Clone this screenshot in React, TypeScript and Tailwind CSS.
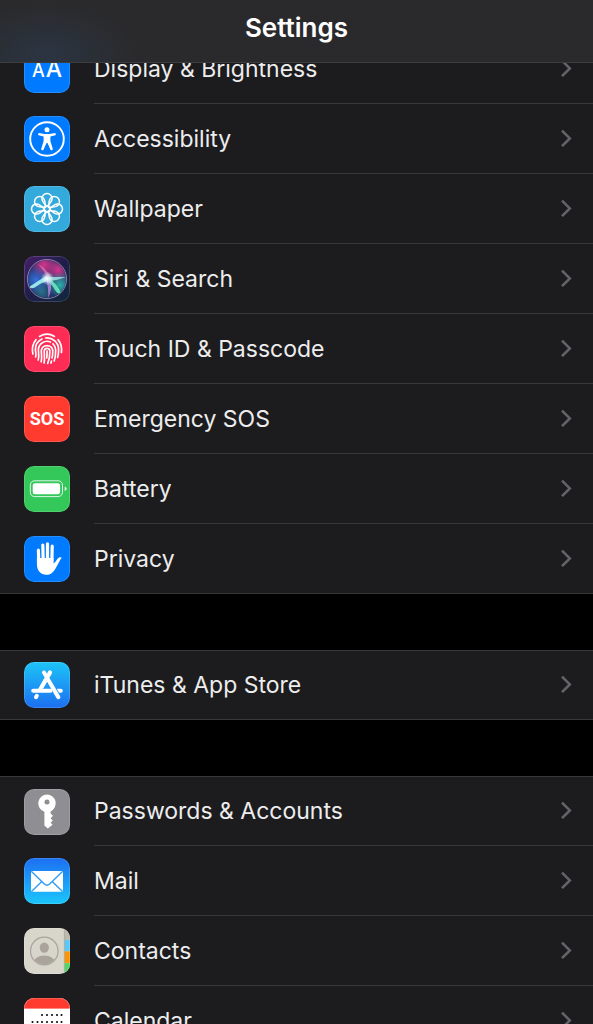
import React from 'react';

interface SettingsItem {
  id: string;
  label: string;
  icon: React.ReactNode;
}

const DisplayIcon = () => (
  <span className="flex h-full w-full items-baseline justify-center gap-px bg-[#007aff] font-['Inter',sans-serif] font-medium text-white">
    <span className="text-lg leading-[44px]">A</span>
    <span className="text-[23px] leading-[44px]">A</span>
  </span>
);

const AccessibilityIcon = () => (
  <svg viewBox="0 0 46 46" className="h-full w-full bg-[#007aff]" aria-hidden="true">
    <circle cx="23" cy="23" r="16.8" fill="none" stroke="#fff" strokeWidth="1.9" />
    <circle cx="23" cy="13.7" r="2.5" fill="#fff" />
    <path
      d="M14.8 16.9 L20.5 17.9 H25.5 L31.2 16.9 Q32.6 18.2 31.4 19.3 L26.4 20.6 V25 L28.9 33.2 Q28 35 26.6 33.9 L23.5 27 H22.5 L19.4 33.9 Q18 35 17.1 33.2 L19.6 25 V20.6 L14.6 19.3 Q13.4 18.2 14.8 16.9 Z"
      fill="#fff"
    />
  </svg>
);

const WallpaperIcon = () => (
  <svg viewBox="0 0 46 46" className="h-full w-full bg-[#34aadc]" aria-hidden="true">
    <g fill="none" stroke="#fff" strokeWidth="1.5">
      {[0, 45, 90, 135, 180, 225, 270, 315].map((angle) => (
        <path
          key={angle}
          d="M23 20.4 C21 18.4 17.9 15.8 17.9 12.6 A5.1 5.1 0 0 1 28.1 12.6 C28.1 15.8 25 18.4 23 20.4 Z"
          transform={`rotate(${angle} 23 23)`}
        />
      ))}
      <circle cx="23" cy="23" r="2.8" />
    </g>
  </svg>
);

const SiriIcon = () => (
  <svg viewBox="0 0 46 46" className="h-full w-full" aria-hidden="true">
    <defs>
      <linearGradient id="siriBg" x1="0" y1="0" x2="1" y2="1">
        <stop offset="0" stopColor="#45206b" />
        <stop offset="0.5" stopColor="#201d48" />
        <stop offset="1" stopColor="#10283f" />
      </linearGradient>
      <radialGradient id="siriPink">
        <stop offset="0" stopColor="#d8358c" />
        <stop offset="1" stopColor="#d8358c" stopOpacity="0" />
      </radialGradient>
      <radialGradient id="siriBlue">
        <stop offset="0" stopColor="#3470dc" />
        <stop offset="1" stopColor="#3470dc" stopOpacity="0" />
      </radialGradient>
      <radialGradient id="siriTeal">
        <stop offset="0" stopColor="#2cb0a8" />
        <stop offset="1" stopColor="#2cb0a8" stopOpacity="0" />
      </radialGradient>
      <radialGradient id="siriGlow">
        <stop offset="0" stopColor="#fff" />
        <stop offset="0.4" stopColor="#e6fbff" stopOpacity="0.7" />
        <stop offset="1" stopColor="#c0f0ff" stopOpacity="0" />
      </radialGradient>
      <clipPath id="siriClip">
        <circle cx="23" cy="23" r="19" />
      </clipPath>
    </defs>
    <rect width="46" height="46" fill="url(#siriBg)" />
    <g clipPath="url(#siriClip)">
      <circle cx="23" cy="23" r="19" fill="#232f66" />
      <circle cx="20" cy="9" r="14" fill="url(#siriPink)" />
      <circle cx="34" cy="14" r="13" fill="url(#siriPink)" />
      <circle cx="12" cy="24" r="14" fill="url(#siriBlue)" />
      <circle cx="36" cy="29" r="13" fill="url(#siriTeal)" />
      <circle cx="18" cy="36" r="11" fill="url(#siriTeal)" opacity="0.5" />
      <path d="M23 22 Q20 14 14 8 Q22 12 27 21 Z" fill="#fb8bc8" opacity="0.55" />
      <path d="M25 21 Q33 21 42 21 Q34 24 26 25 Z" fill="#a5e9e6" opacity="0.8" />
      <path d="M22 20 Q14 25 5 31 Q8 34 13 30 Q18 26 25 25 Z" fill="#a4f3f0" opacity="0.9" />
      <path d="M25 22 Q34 29 37 37 Q34 39 31 34 Q28 28 22 25 Z" fill="#6fefc0" opacity="0.85" />
      <path d="M22 24 Q25 33 24 42 Q29 33 26 24 Z" fill="#c58be8" opacity="0.75" />
      <circle cx="23.5" cy="22.5" r="7" fill="url(#siriGlow)" />
    </g>
    <circle cx="23" cy="23" r="19.6" fill="none" stroke="#a9a7c4" strokeWidth="0.9" opacity="0.8" />
  </svg>
);

const TouchIdIcon = () => (
  <svg viewBox="0 0 46 46" className="h-full w-full bg-[#ff2d55]" aria-hidden="true">
    <g fill="none" stroke="#fff" strokeWidth="1.7" strokeLinecap="round">
      <path d="M15.5 10.4 A14.8 14.8 0 0 1 30.5 10.4" />
      <path d="M8.9 28 C7.9 23.5 8.4 18 12 13.6" />
      <path d="M34 13.6 C37.6 18 38.1 22 37.4 26.5" />
      <path d="M11.6 31 C12.6 28 11.4 26.5 11.4 23.5 A11.6 11.6 0 0 1 18 13" />
      <path d="M21.5 12 A11.6 11.6 0 0 1 34.6 23.8 C34.6 27 34.4 29 33.6 31.5" />
      <path d="M14.2 34 C15.4 30.5 14.4 27 14.4 24 A8.7 8.7 0 0 1 26.5 16" />
      <path d="M29 17.8 A8.7 8.7 0 0 1 31.7 24 C31.7 28 31.4 31.5 30.2 35" />
      <path d="M17.2 35.8 C18.2 32 17.3 28 17.3 24.6 A5.8 5.8 0 0 1 28.8 24.6 C28.8 28 28.6 30 28 32" />
      <path d="M27.4 35.2 L27 37" />
      <path d="M20.1 37 C21 33 20.2 28.5 20.2 24.8 A2.9 2.9 0 0 1 25.9 24.8 C25.9 29 25.4 33.5 23.7 37.4" />
      <path d="M23 25 C23.1 28.4 23 30 22.8 32" />
    </g>
  </svg>
);

const SosIcon = () => (
  <span className="flex h-full w-full items-center justify-center bg-[#ff3b30] font-['Roboto',sans-serif] text-lg font-bold leading-none text-white">
    SOS
  </span>
);

const BatteryIcon = () => (
  <svg viewBox="0 0 46 46" className="h-full w-full bg-[#34c759]" aria-hidden="true">
    <rect x="6.3" y="14.8" width="32.2" height="15.8" rx="4.3" fill="none" stroke="#fff" strokeWidth="1" opacity="0.85" />
    <rect x="8.7" y="17.2" width="27.4" height="11" rx="2.3" fill="#fff" />
    <path d="M40.6 20.4 Q42.8 21.3 42.8 22.7 Q42.8 24.1 40.6 25 Z" fill="#fff" opacity="0.8" />
  </svg>
);

const PrivacyIcon = () => (
  <svg viewBox="0 0 46 46" className="h-full w-full bg-[#007aff]" aria-hidden="true">
    <g stroke="#fff" strokeWidth="3.2" strokeLinecap="round">
      <path d="M14.4 14.2 L14.8 27" />
      <path d="M18.8 9 L19.2 25" />
      <path d="M23.5 7.8 V25" />
      <path d="M28.2 10.2 L27.9 25" />
    </g>
    <path
      d="M12.9 22 H29.5 V27.2 C31.5 26.6 32.4 24.2 33.8 22.5 C35 21 37 20.8 37.8 21.7 C35.4 24.4 33.8 29 31.4 32.7 C29.2 36.4 26.5 38.8 22.4 38.8 C16.4 38.8 12.9 34.5 12.9 28 Z"
      fill="#fff"
    />
  </svg>
);

const AppStoreIcon = () => (
  <svg viewBox="0 0 46 46" className="h-full w-full" aria-hidden="true">
    <defs>
      <linearGradient id="storeBg" x1="0" y1="0" x2="0" y2="1">
        <stop offset="0" stopColor="#1dc4f8" />
        <stop offset="1" stopColor="#1c6ff0" />
      </linearGradient>
    </defs>
    <rect width="46" height="46" fill="url(#storeBg)" />
    <g stroke="#fff" strokeWidth="4" strokeLinecap="round">
      <path d="M33.8 28.8 H36.8" />
      <path d="M26 10.6 L15.8 28" />
      <path d="M12.8 33.8 L12 35.2" />
    </g>
    <path d="M20 10.6 L34.4 35.2" stroke="#2594f4" strokeWidth="5.6" />
    <path d="M20 10.6 L34.4 35.2" stroke="#fff" strokeWidth="4" strokeLinecap="round" />
    <path d="M26 10.6 L18 24.4" stroke="#fff" strokeWidth="4" strokeLinecap="round" />
    <path d="M9.2 28.8 H26.5" stroke="#fff" strokeWidth="4" strokeLinecap="round" />
  </svg>
);

const KeyIcon = () => (
  <svg viewBox="0 0 46 46" className="h-full w-full bg-[#8e8e93]" aria-hidden="true">
    <path
      fillRule="evenodd"
      d="M23 5.6 A8.8 8.8 0 0 1 26.6 22.4 V24.4 L29 26.8 L26.6 29.2 L28.8 31.6 L26.6 33.8 L28.6 35.8 L23.8 39.6 L20.4 36.6 V22.8 A8.8 8.8 0 0 1 23 5.6 Z M23 10.4 A2.5 2.5 0 1 0 23 15.4 A2.5 2.5 0 1 0 23 10.4 Z"
      fill="#fff"
    />
  </svg>
);

const MailIcon = () => (
  <svg viewBox="0 0 46 46" className="h-full w-full" aria-hidden="true">
    <defs>
      <linearGradient id="mailBg" x1="0" y1="0" x2="0" y2="1">
        <stop offset="0" stopColor="#1d6ff2" />
        <stop offset="1" stopColor="#1bc6fb" />
      </linearGradient>
    </defs>
    <rect width="46" height="46" fill="url(#mailBg)" />
    <rect x="7" y="13" width="32" height="20.8" rx="1.6" fill="#fff" />
    <g fill="none" stroke="#2f9cf5" strokeWidth="1.4">
      <path d="M7.5 13.6 L20.4 26 Q23 28.4 25.6 26 L38.5 13.6" />
      <path d="M7.5 33.4 L17.8 23.5 M38.5 33.4 L28.2 23.5" />
    </g>
  </svg>
);

const ContactsIcon = () => (
  <svg viewBox="0 0 46 46" className="h-full w-full" aria-hidden="true">
    <defs>
      <clipPath id="avatarClip">
        <circle cx="20.3" cy="23" r="13.2" />
      </clipPath>
    </defs>
    <rect width="46" height="46" fill="#d8d5cb" />
    <rect x="40.6" width="5.4" height="12" fill="#bdb9ae" />
    <rect x="40.6" y="12" width="5.4" height="11.4" fill="#5ac8fa" />
    <rect x="40.6" y="23.4" width="5.4" height="11.8" fill="#ff9500" />
    <rect x="40.6" y="35.2" width="5.4" height="10.8" fill="#4cd964" />
    <path d="M40.4 0 V46" stroke="#a7a49b" strokeWidth="0.8" />
    <circle cx="20.3" cy="23" r="13.8" fill="none" stroke="#a9a39b" strokeWidth="1.2" />
    <g fill="#a9a39b" clipPath="url(#avatarClip)">
      <ellipse cx="20.3" cy="19.6" rx="4.6" ry="5.2" />
      <ellipse cx="20.3" cy="35" rx="11" ry="7.4" />
    </g>
  </svg>
);

const CalendarIcon = () => (
  <svg viewBox="0 0 46 46" className="h-full w-full bg-white" aria-hidden="true">
    <rect width="46" height="10.6" fill="#ff3b30" />
    <g fill="#000">
      {[18, 23, 28, 33, 37.5].map((x) => (
        <circle key={x} cx={x} cy="17" r="1" />
      ))}
      {[24, 31, 38].map((y) =>
        [8.5, 13.5, 18, 23, 28, 33, 37.5].map((x) => <circle key={`${x}-${y}`} cx={x} cy={y} r="1" />)
      )}
    </g>
  </svg>
);

const groups: SettingsItem[][] = [
  [
    { id: 'display', label: 'Display & Brightness', icon: <DisplayIcon /> },
    { id: 'accessibility', label: 'Accessibility', icon: <AccessibilityIcon /> },
    { id: 'wallpaper', label: 'Wallpaper', icon: <WallpaperIcon /> },
    { id: 'siri', label: 'Siri & Search', icon: <SiriIcon /> },
    { id: 'touch-id', label: 'Touch ID & Passcode', icon: <TouchIdIcon /> },
    { id: 'sos', label: 'Emergency SOS', icon: <SosIcon /> },
    { id: 'battery', label: 'Battery', icon: <BatteryIcon /> },
    { id: 'privacy', label: 'Privacy', icon: <PrivacyIcon /> }
  ],
  [{ id: 'store', label: 'iTunes & App Store', icon: <AppStoreIcon /> }],
  [
    { id: 'passwords', label: 'Passwords & Accounts', icon: <KeyIcon /> },
    { id: 'mail', label: 'Mail', icon: <MailIcon /> },
    { id: 'contacts', label: 'Contacts', icon: <ContactsIcon /> },
    { id: 'calendar', label: 'Calendar', icon: <CalendarIcon /> }
  ]
];

const SettingsRow: React.FC<{ item: SettingsItem }> = ({ item }) => (
  <li className="group h-[70px] border-[#38383b] bg-[#1c1c1e] first:border-t last:border-b">
    <a href={`#${item.id}`} className="flex h-full items-center gap-6 pl-6">
      <span className="relative h-[46px] w-[46px] shrink-0 overflow-hidden rounded-[10px]">
        {item.icon}
        <span className="absolute inset-0 rounded-[10px] border border-white/15" />
      </span>
      <span className="flex h-full flex-1 items-center justify-between border-b border-[#38383b] pr-[21px] group-last:border-b-0">
        <span className="text-[23px] leading-7 text-[#ededee]">{item.label}</span>
        <svg viewBox="0 0 12 20" className="h-5 w-3" fill="none" stroke="#646468" strokeWidth="2.6" aria-hidden="true">
          <path d="M2 1.6 L9.8 9.4 L2 17.2" />
        </svg>
      </span>
    </a>
  </li>
);

const App: React.FC = () => {
  return (
    <div className="flex h-screen flex-col overflow-hidden bg-black font-['Inter',sans-serif]">
      {/* Header */}
      <header className="z-10 flex h-[63px] shrink-0 items-center justify-center border-b border-[#3d3d40] bg-[#2a2a2c] bg-[radial-gradient(ellipse_90px_50px_at_46px_54px,#2b3542,transparent)] pb-1.5">
        <h1 className="text-[26px] font-semibold leading-8 text-white">Settings</h1>
      </header>

      {/* List, scrolled partly under the header */}
      <main className="-mt-[29px] flex flex-col gap-14">
        {groups.map((items) => (
          <ul key={items[0].id}>
            {items.map((item) => (
              <SettingsRow key={item.id} item={item} />
            ))}
          </ul>
        ))}
      </main>
    </div>
  );
};

export default App;
